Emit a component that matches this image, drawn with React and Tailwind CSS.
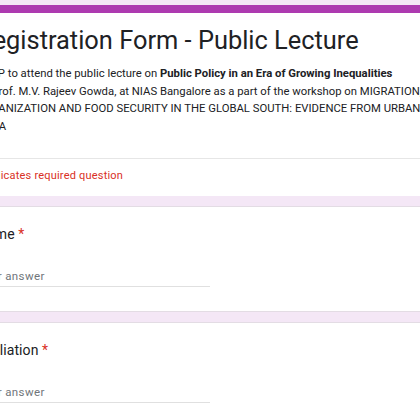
import React from 'react'

function Question({ label }) {
  return (
    <div className="bg-white border-y border-[#e3dce4] pt-[17px] pb-[24px]">
      <div className="text-[14px] leading-[20px] text-[#202124] tracking-[0.1px] whitespace-nowrap">
        {label} <span className="text-[#d93025]">*</span>
      </div>
      <div className="mt-[24px] w-[233px] border-b border-[#e0e0e0] pb-[2px] text-[11.5px] leading-[16px] text-[#70757a] tracking-[0.4px]">
        Your answer
      </div>
    </div>
  )
}

export default function App() {
  return (
    <div className="w-[420px] h-[420px] overflow-hidden bg-[#f4e7f6]" style={{ fontFamily: 'Roboto, "Noto Sans", sans-serif' }}>
      <div className="ml-[-23px] w-[500px] pt-[5px] flex flex-col">
        <div className="h-[8px] bg-[#ad3ab0]" />
        <div className="bg-white">
          <div className="pt-[7px] pb-[22px] border-b border-[#e6e6e6]">
            <h1 className="text-[25.4px] leading-[40px] text-[#202124] whitespace-nowrap">Registration Form - Public Lecture</h1>
            <p className="mt-[5px] text-[11.3px] leading-[17.7px] text-[#202124] whitespace-nowrap">
              RSVP to attend the public lecture on <b className="font-bold">Public Policy in an Era of Growing Inequalities</b>
              <br />
              by Prof. M.V. Rajeev Gowda, at NIAS Bangalore as a part of the workshop on MIGRATION,
              <br />
              URBANIZATION AND FOOD SECURITY IN THE GLOBAL SOUTH: EVIDENCE FROM URBAN
              <br />
              INDIA
            </p>
          </div>
          <div className="pt-[9px] pb-[12px] text-[11px] leading-[16px] text-[#d93025] tracking-[0.2px] whitespace-nowrap">
            * Indicates required question
          </div>
        </div>
        <div className="h-[10px]" />
        <Question label="Name" />
        <div className="h-[10px]" />
        <Question label="Affiliation" />
      </div>
    </div>
  )
}
